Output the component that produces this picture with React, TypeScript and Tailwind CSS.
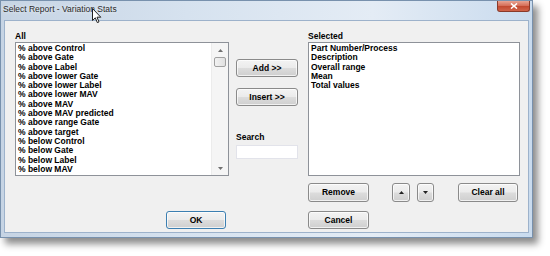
import React from "react";

const allItems = [
  "% above Control",
  "% above Gate",
  "% above Label",
  "% above lower Gate",
  "% above lower Label",
  "% above lower MAV",
  "% above MAV",
  "% above MAV predicted",
  "% above range Gate",
  "% above target",
  "% below Control",
  "% below Gate",
  "% below Label",
  "% below MAV",
];

const selectedItems = ["Part Number/Process", "Description", "Overall range", "Mean", "Total values"];

function Tri({ down = false, color = "#222" }: { down?: boolean; color?: string }) {
  return (
    <svg width="5" height="3" viewBox="0 0 5 3">
      <path d={down ? "M0 0 L5 0 L2.5 3 Z" : "M0 3 L5 3 L2.5 0 Z"} fill={color} />
    </svg>
  );
}

function WinButton({
  children,
  className = "",
  primary = false,
}: {
  children: React.ReactNode;
  className?: string;
  primary?: boolean;
}) {
  return (
    <button
      className={`flex items-center justify-center rounded-[3px] border text-[8.5px] font-bold text-black bg-[linear-gradient(to_bottom,#f3f3f3_0%,#ebebeb_48%,#dcdcdc_52%,#cfcfcf_100%)] shadow-[inset_0_0_0_1px_rgba(255,255,255,0.7)] ${
        primary ? "border-[#3c7fb1]" : "border-[#8a8a8a]"
      } ${className}`}
    >
      {children}
    </button>
  );
}

export default function App() {
  return (
    <div className="w-[550px] h-[256px] bg-white font-['Liberation_Sans',Arial,sans-serif] overflow-hidden">
      {/* Window */}
      <div className="relative w-[533px] h-[238px] flex flex-col border border-[#7891ad] bg-[linear-gradient(to_right,#c6d4e4_0%,#d6e2ef_35%,#e4ecf5_70%,#c9dbee_100%)] shadow-[5px_6px_7px_rgba(0,0,0,0.45)]">
        {/* Title bar */}
        <div className="h-[19px] flex items-start">
          <span className="mt-[3px] ml-[2px] text-[8.5px] leading-[10px] text-[#2a2a2a] [text-shadow:0_0_4px_rgba(255,255,255,0.9)]">
            Select Report - Variation Stats
          </span>
          <div className="ml-auto mr-[2px] w-[33px] h-[11px] flex items-center justify-center rounded-b-[3px] border border-t-0 border-[#8a3a2a] bg-[linear-gradient(to_bottom,#e8a493_0%,#d6705a_45%,#c24a31_55%,#d0644a_100%)]">
            <svg width="8" height="6" viewBox="0 0 8 6">
              <path d="M1 0.5 L7 5.5 M7 0.5 L1 5.5" stroke="white" strokeWidth="1.6" />
            </svg>
          </div>
        </div>

        {/* Client area */}
        <div className="mx-[3px] mb-[4px] flex-1 flex border border-[#9db2cb] bg-[#f0f0f0] pl-[10px] pt-[10px]">
          {/* Left column */}
          <div className="w-[214px] flex flex-col">
            <div className="text-[8.5px] leading-[11px] font-bold text-black">All</div>
            <div className="h-[134px] flex border border-[#8e9299] bg-white">
              <div className="flex-1 pl-[2px] pt-[1px] overflow-hidden">
                {allItems.map((item) => (
                  <div key={item} className="text-[8.5px] leading-[9.3px] font-bold text-black whitespace-nowrap">
                    {item}
                  </div>
                ))}
              </div>
              {/* Scrollbar */}
              <div className="w-[17px] flex flex-col items-center bg-[#f5f5f5] border-l border-[#ececec]">
                <div className="h-[14px] flex items-center justify-center">
                  <Tri color="#707070" />
                </div>
                <div className="w-[12px] h-[10px] rounded-[2px] border border-[#a0a0a0] bg-[linear-gradient(to_right,#f2f2f2,#e0e0e0)]" />
                <div className="mt-auto h-[14px] flex items-center justify-center">
                  <Tri down color="#707070" />
                </div>
              </div>
            </div>
            <WinButton primary className="self-end mr-[3px] mt-[35px] w-[60px] h-[18px]">
              OK
            </WinButton>
          </div>

          {/* Middle column */}
          <div className="ml-[7px] w-[62px] flex flex-col">
            <WinButton className="mt-[28px] w-[62px] h-[18px]">Add &gt;&gt;</WinButton>
            <WinButton className="mt-[11px] w-[62px] h-[18px]">Insert &gt;&gt;</WinButton>
            <div className="mt-[26px] text-[8.5px] leading-[11px] font-bold text-black">Search</div>
            <div className="mt-[2px] w-[62px] h-[14px] bg-white border border-[#e2e3ea]" />
          </div>

          {/* Right column */}
          <div className="ml-[10px] w-[212px] flex flex-col">
            <div className="text-[8.5px] leading-[11px] font-bold text-black">Selected</div>
            <div className="h-[134px] border border-[#8e9299] bg-white pl-[2px] pt-[1px]">
              {selectedItems.map((item) => (
                <div key={item} className="text-[8.5px] leading-[9.3px] font-bold text-black whitespace-nowrap">
                  {item}
                </div>
              ))}
            </div>
            <div className="mt-[7px] flex items-center">
              <WinButton className="w-[61px] h-[19px]">Remove</WinButton>
              <WinButton className="ml-[23px] w-[18px] h-[19px]">
                <Tri />
              </WinButton>
              <WinButton className="ml-[7px] w-[17px] h-[19px]">
                <Tri down />
              </WinButton>
              <WinButton className="ml-[24px] w-[60px] h-[19px]">Clear all</WinButton>
            </div>
            <WinButton className="mt-[9px] w-[61px] h-[18px]">Cancel</WinButton>
          </div>
        </div>

        {/* Mouse cursor */}
        <svg className="absolute left-[91px] top-[7px]" width="10" height="16" viewBox="0 0 10 16">
          <path
            d="M0.5 0.5 L0.5 12.5 L3.3 9.8 L5.3 14.6 L7 13.9 L5 9.2 L8.8 9.2 Z"
            fill="white"
            stroke="#222"
            strokeWidth="1"
            strokeLinejoin="round"
          />
        </svg>
      </div>
    </div>
  );
}
